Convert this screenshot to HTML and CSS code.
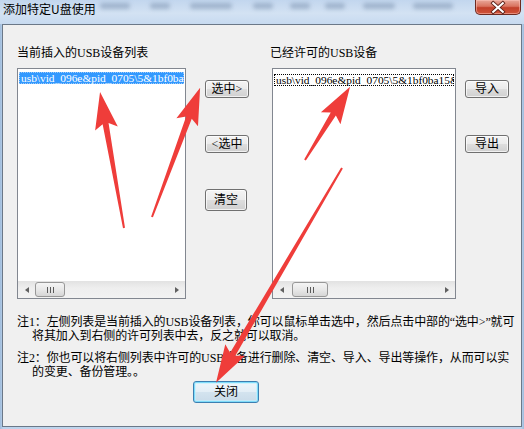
FILE: index.html
```html
<!DOCTYPE html>
<html>
<head>
<meta charset="utf-8">
<link rel="stylesheet" href="styles.css">
</head>
<body>
<div class="window">
  <div class="titlebar">
    <span class="title">添加特定U盘使用</span>
    <div class="glass">
      <span class="blob b1"></span><span class="blob b2"></span><span class="blob b3"></span><span class="blob b4"></span>
      <span class="blob b5"></span><span class="blob b6"></span><span class="blob b7"></span><span class="blob b8"></span>
    </div>
    <div class="close">
      <svg width="46" height="15" viewBox="0 0 46 15">
        <path d="M18 3 L28 12 M28 3 L18 12" stroke="#5a1f17" stroke-width="4" stroke-linecap="square"/>
        <path d="M18 3 L28 12 M28 3 L18 12" stroke="#ffffff" stroke-width="2.2" stroke-linecap="square"/>
      </svg>
    </div>
  </div>
  <div class="client">
    <div class="lists">
      <div class="col left-col">
        <div class="label">当前插入的USB设备列表</div>
        <div class="listbox">
          <div class="items">
            <div class="item selected">usb\vid_096e&amp;pid_0705\5&amp;1bf0ba15&amp;0</div>
          </div>
          <div class="hscroll">
            <div class="sbtn"><span class="tri tri-left"></span></div>
            <div class="thumb"><span class="grip"></span></div>
            <div class="track"></div>
            <div class="sbtn"><span class="tri tri-right"></span></div>
          </div>
        </div>
      </div>
      <div class="btncol mid">
        <button class="btn b-sel">选中&gt;</button>
        <button class="btn b-unsel">&lt;选中</button>
        <button class="btn b-clear">清空</button>
      </div>
      <div class="col right-col">
        <div class="label rlabel">已经许可的USB设备</div>
        <div class="listbox">
          <div class="items">
            <div class="item focused">usb\vid_096e&amp;pid_0705\5&amp;1bf0ba15&amp;0</div>
          </div>
          <div class="hscroll">
            <div class="sbtn"><span class="tri tri-left"></span></div>
            <div class="thumb wide"><span class="grip"></span></div>
            <div class="track"></div>
            <div class="sbtn"><span class="tri tri-right"></span></div>
          </div>
        </div>
      </div>
      <div class="btncol side">
        <button class="btn b-imp">导入</button>
        <button class="btn b-exp">导出</button>
      </div>
    </div>
    <div class="notes">
      <p class="note">注1：左侧列表是当前插入的USB设备列表，你可以鼠标单击选中，然后点击中部的“选中&gt;”就可<br>将其加入到右侧的许可列表中去，反之就可以取消。</p>
      <p class="note">注2：你也可以将右侧列表中许可的USB设备进行删除、清空、导入、导出等操作，从而可以实<br>的变更、备份管理。。</p>
    </div>
    <div class="footer">
      <button class="btn default">关闭</button>
    </div>
  </div>
</div>
<svg class="arrows" width="524" height="429" viewBox="0 0 524 429">
  <g fill="#ef3d3a">
    <polygon transform="translate(124,228) rotate(-100)" points="0,-1 106,-3 101,-11.5 138,0 101,11.5 106,3 0,1"/>
    <polygon transform="translate(152,217) rotate(-69.6)" points="0,-1 106,-3 101,-11.5 138,0 101,11.5 106,3 0,1"/>
    <polygon transform="translate(305,160) rotate(-58.4)" points="0,-1 54,-3 49,-11.5 86,0 49,11.5 54,3 0,1"/>
    <polygon transform="translate(342,168) rotate(120.4)" points="0,-1 216,-3 211,-11.5 249,0 211,11.5 216,3 0,1"/>
  </g>
</svg>
</body>
</html>
```

FILE: styles.css
```css
html, body {
  margin: 0;
  padding: 0;
}
body {
  width: 524px;
  height: 429px;
  overflow: hidden;
  position: relative;
  font-family: "Liberation Serif", "Noto Sans CJK SC", serif;
  font-size: 12px;
  color: #000;
  background: linear-gradient(90deg, #9fbcdc 0px, #bcd3ec 3px, #c8dbef 50%, #bcd3ec 521px, #9fbcdc 524px);
}
.window {
  width: 524px;
  height: 429px;
  display: flex;
  flex-direction: column;
}
.titlebar {
  height: 24px;
  display: flex;
  align-items: flex-start;
  padding-left: 3px;
  background: linear-gradient(180deg, #c2d6ee 0%, #d3e2f3 55%, #c7daf0 100%);
}
.title {
  font-family: "Noto Sans CJK SC", sans-serif;
  font-size: 12px;
  line-height: 18px;
  color: #000;
  white-space: nowrap;
}
.glass {
  flex: 1;
  display: flex;
  align-items: flex-start;
  padding-top: 3px;
  padding-left: 4px;
}
.blob {
  display: block;
  height: 6px;
  background: rgba(70, 95, 130, 0.32);
  filter: blur(2px);
  border-radius: 3px;
}
.b1 { width: 30px; }
.b2 { width: 20px; margin-left: 20px; }
.b3 { width: 42px; margin-left: 20px; }
.b4 { width: 20px; margin-left: 21px; }
.b5 { width: 20px; margin-left: 17px; }
.b6 { width: 20px; margin-left: 15px; }
.b7 { width: 32px; margin-left: 18px; }
.b8 { width: 40px; margin-left: 18px; }
.close {
  width: 46px;
  height: 15px;
  margin-right: 3px;
  box-sizing: border-box;
  border: 1px solid #6d2a20;
  border-top: none;
  border-radius: 0 0 5px 5px;
  background: linear-gradient(180deg, #e9a89a 0%, #d9735f 45%, #c2402a 55%, #d0543a 100%);
  box-shadow: inset 0 0 0 1px rgba(255, 200, 190, 0.5);
  display: flex;
}
.close svg { display: block; }

.client {
  margin: 0 2px;
  height: 401px;
  border: 1px solid #6b7888;
  background: #f0f0f0;
  display: flex;
  flex-direction: column;
}
.lists {
  display: flex;
  align-items: flex-start;
  padding: 20px 0 0 14px;
}
.col {
  display: flex;
  flex-direction: column;
}
.left-col { width: 169px; }
.right-col { width: 184px; margin-left: 23px; }
.label {
  line-height: 16px;
  margin-bottom: 7px;
  white-space: nowrap;
}
.rlabel { margin-left: -2px; }
.listbox {
  box-sizing: border-box;
  height: 231px;
  border: 1px solid #828790;
  background: #fff;
  display: flex;
  flex-direction: column;
}
.items {
  flex: 1;
  padding: 3px 1px 0 1px;
  overflow: hidden;
}
.item {
  height: 12px;
  line-height: 12px;
  font-size: 11.4px;
  white-space: nowrap;
  overflow: hidden;
  padding-left: 2px;
}
.item.selected {
  background: #3399ff;
  color: #fff;
  outline: 1px dotted #9cc9f7;
  outline-offset: -1px;
}
.item.focused {
  outline: 1px dotted #000;
  outline-offset: -1px;
  padding-top: 1px;
  height: 11px;
  line-height: 11px;
  margin-top: 2px;
}
.hscroll {
  height: 17px;
  display: flex;
  background: linear-gradient(180deg, #e2e2e2 0%, #eeeeee 40%, #f2f2f2 100%);
}
.sbtn {
  width: 17px;
  height: 17px;
  display: flex;
  align-items: center;
  justify-content: center;
}
.tri {
  width: 0;
  height: 0;
  border-top: 3.5px solid transparent;
  border-bottom: 3.5px solid transparent;
}
.tri-left { border-right: 4px solid #606060; }
.tri-right { border-left: 4px solid #606060; }
.thumb {
  box-sizing: border-box;
  width: 30px;
  height: 15px;
  margin-top: 1px;
  border: 1px solid #979797;
  border-radius: 3px;
  background: linear-gradient(180deg, #f4f4f4 0%, #e8e8e8 50%, #d6d6d6 100%);
  display: flex;
  align-items: center;
  justify-content: center;
}
.thumb.wide { width: 36px; margin-left: 2px; }
.grip {
  width: 7px;
  height: 6px;
  background: repeating-linear-gradient(90deg, #5a5a5a 0px, #5a5a5a 1px, transparent 1px, transparent 3px);
}
.track { flex: 1; }

.btncol {
  display: flex;
  flex-direction: column;
  align-items: flex-start;
  padding-top: 35px;
}
.mid { margin-left: 19px; }
.side { margin-left: 9px; }
.btn {
  box-sizing: border-box;
  width: 44px;
  height: 18px;
  padding: 0;
  margin: 0;
  border: 1px solid #707070;
  border-radius: 3px;
  background: linear-gradient(180deg, #f4f4f4 0%, #ebebeb 48%, #dddddd 52%, #d0d0d0 100%);
  box-shadow: inset 0 0 0 1px rgba(255, 255, 255, 0.7);
  font-family: "Liberation Serif", "Noto Sans CJK SC", serif;
  font-size: 12px;
  line-height: 14px;
  color: #000;
  display: flex;
  align-items: center;
  justify-content: center;
}
.b-unsel { margin-top: 37px; }
.b-clear { margin-top: 36px; width: 42px; height: 22px; }
.b-exp { margin-top: 37px; }

.notes {
  padding: 16px 0 0 14px;
}
.note {
  margin: 0 0 8px 0;
  line-height: 14px;
  padding-left: 15px;
  text-indent: -15px;
  white-space: nowrap;
  letter-spacing: -0.12px;
}
.footer {
  padding-left: 190px;
  margin-top: -6px;
}
.btn.default {
  width: 66px;
  height: 22px;
  border-color: #3c7fb1;
  box-shadow: inset 0 0 0 1px #7fdcfa, inset 0 0 0 2px rgba(190, 240, 255, 0.6);
  background: linear-gradient(180deg, #f0f6fa 0%, #e3eef6 48%, #d3e3ef 52%, #c9dbe9 100%);
}

.arrows {
  position: absolute;
  left: 0;
  top: 0;
  pointer-events: none;
}
```
